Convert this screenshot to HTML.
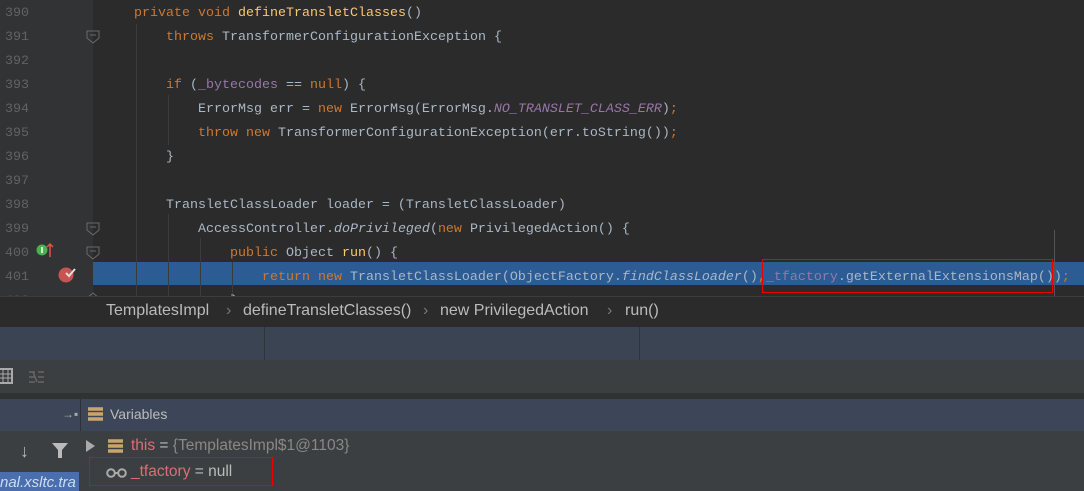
<!DOCTYPE html>
<html><head><meta charset="utf-8"><style>
*{margin:0;padding:0;box-sizing:border-box}
body{width:1084px;height:491px;overflow:hidden;background:#2b2b2b;position:relative;font-family:"Liberation Sans",sans-serif}
.gut{position:absolute;left:0;top:0;width:93px;height:296px;background:#313335}
.ln{position:absolute;left:5px;width:30px;font:13.33px "Liberation Mono",monospace;color:#606366;line-height:24px}
.code{position:absolute;left:102px;font:13.33px "Liberation Mono",monospace;color:#a9b7c6;line-height:24px;white-space:pre}
.k{color:#cc7832}.f{color:#ffc66d}.p{color:#9876aa}.i{font-style:italic}.ps{color:#9876aa;font-style:italic}
.sel{position:absolute;left:93px;top:262px;width:991px;height:23px;background:#2d5c94}
.vl{position:absolute;width:1px;background:#3b3b3b}
.bc{position:absolute;left:0;top:296px;width:1084px;height:31px;background:#2b2b2b;border-top:1px solid #3c3c3c;color:#bbb;font-size:16px}
.bc span{position:absolute;top:5px}
.band{position:absolute;left:0;top:327px;width:1084px;height:33px;background:#3b4452}
.tb{position:absolute;left:0;top:360px;width:1084px;height:33px;background:#3c3f41}
.sep{position:absolute;left:0;top:393px;width:1084px;height:6px;background:#323232}
.vh{position:absolute;left:0;top:399px;width:1084px;height:32px;background:#3d4658}
.low{position:absolute;left:0;top:431px;width:1084px;height:60px;background:#3c3f41}
.red{position:absolute;border:1.5px solid #e00}
</style></head><body>
<div class="gut"></div>
<div class="sel"></div>
<div class="vl" style="left:136px;top:24px;height:272px"></div>
<div class="vl" style="left:168px;top:95px;height:50px"></div>
<div class="vl" style="left:168px;top:214px;height:82px"></div>
<div class="vl" style="left:200px;top:238px;height:58px"></div>
<div class="vl" style="left:232px;top:262px;height:34px"></div>
<div style="position:absolute;left:1054px;top:230px;width:1px;height:66px;background:#555"></div>
<div class="ln" style="top:2px">390<br>391<br>392<br>393<br>394<br>395<br>396<br>397<br>398<br>399<br>400<br>401<br>402</div>
<div class="code" style="top:2px"><span>    <span class="k">private void </span><span class="f">defineTransletClasses</span>()
        <span class="k">throws </span>TransformerConfigurationException {

        <span class="k">if </span>(<span class="p">_bytecodes</span> == <span class="k">null</span>) {
            ErrorMsg err = <span class="k">new </span>ErrorMsg(ErrorMsg.<span class="ps">NO_TRANSLET_CLASS_ERR</span>)<span class="k">;</span>
            <span class="k">throw new </span>TransformerConfigurationException(err.toString())<span class="k">;</span>
        }

        TransletClassLoader loader = (TransletClassLoader)
            AccessController.<span class="i">doPrivileged</span>(<span class="k">new </span>PrivilegedAction() {
                <span class="k">public </span>Object <span class="f">run</span>() {
                    <span class="k">return new </span>TransletClassLoader(ObjectFactory.<span class="i">findClassLoader</span>()<span class="k">,</span><span class="p">_tfactory</span>.getExternalExtensionsMap())<span class="k">;</span>
                }</span></div>
<svg style="position:absolute;left:86px;top:30px" width="14" height="270"><g fill="none" stroke="#6a6a6a"><path d="M1 1h12v7l-6 5l-6-5z"/><path d="M1 193h12v7l-6 5l-6-5z"/><path d="M1 217h12v7l-6 5l-6-5z"/><path d="M1 268l6-5l6 5"/></g><g stroke="#6a6a6a"><path d="M4 5h6M4 197h6M4 221h6"/></g></svg>
<svg style="position:absolute;left:35px;top:241px" width="20" height="20"><circle cx="7" cy="9" r="5.5" fill="#4caf50"/><path d="M7 6v6" stroke="#fff" stroke-width="1.5"/><path d="M15 16V3M12 6l3-3l3 3" stroke="#e05545" stroke-width="1.5" fill="none"/></svg>
<svg style="position:absolute;left:56px;top:262px" width="22" height="22"><circle cx="10" cy="13" r="7.5" fill="#c75450"/><path d="M10 11l3 3l6-7" stroke="#ddd" stroke-width="2" fill="none"/></svg>
<div class="red" style="left:762px;top:259px;width:291px;height:34px"></div>
<div class="bc"><span style="left:106px">TemplatesImpl</span><span style="left:226px;color:#777">›</span><span style="left:243px">defineTransletClasses()</span><span style="left:423px;color:#777">›</span><span style="left:440px">new PrivilegedAction</span><span style="left:607px;color:#777">›</span><span style="left:625px">run()</span></div>
<div class="band"><div style="position:absolute;left:264px;top:0;width:1px;height:33px;background:#2f353f"></div><div style="position:absolute;left:639px;top:0;width:1px;height:33px;background:#2f353f"></div></div>
<div class="tb">
<svg style="position:absolute;left:0;top:8px" width="60" height="18"><rect x="-4" y="1" width="16" height="14" fill="none" stroke="#aaa" stroke-width="2"/><path d="M-2 6h14M-2 10h14M3 2v13M8 2v13" stroke="#aaa"/><path d="M29 4h6M29 9h6M29 14h6M38 4h6M38 9h6M38 14h6M33 4l4 10" stroke="#666" stroke-width="1.5"/></svg>
</div>
<div class="sep"></div>
<div class="vh">
<span style="position:absolute;left:62px;top:8px;color:#aaa;font-size:12px">→▪</span>
<div style="position:absolute;left:80px;top:0;width:1px;height:92px;background:#2f3234"></div>
<svg style="position:absolute;left:88px;top:8px" width="16" height="16"><path d="M0 2h15M0 7h15M0 12h15" stroke="#c9a56a" stroke-width="3.5"/></svg>
<span style="position:absolute;left:110px;top:7px;color:#bbb;font-size:14px">Variables</span>
</div>
<div class="low">
<span style="position:absolute;left:20px;top:10px;color:#bbb;font-size:18px">↓</span>
<svg style="position:absolute;left:52px;top:12px" width="16" height="16"><path d="M0 0h16l-6 7v8h-4v-8z" fill="#bbb"/></svg>
<div style="position:absolute;left:0;top:41px;width:79px;height:19px;background:#4b6eaf"></div>
<span style="position:absolute;left:0;top:43px;color:#cde;font-size:15px;font-style:italic">nal.xsltc.tra</span>
<svg style="position:absolute;left:86px;top:8px" width="16" height="16"><path d="M0 1l9 6l-9 6z" fill="#aaa"/></svg>
<svg style="position:absolute;left:108px;top:8px" width="16" height="16"><path d="M0 2h15M0 7h15M0 12h15" stroke="#c9a56a" stroke-width="3.5"/></svg>
<span style="position:absolute;left:131px;top:6px;font-size:15.5px;color:#bbb"><span style="color:#e06c75">this</span> = <span style="color:#888">{TemplatesImpl$1@1103}</span></span>
<svg style="position:absolute;left:106px;top:36px" width="22" height="12"><circle cx="5" cy="6" r="3.8" fill="none" stroke="#aaa" stroke-width="2"/><circle cx="16" cy="6" r="3.8" fill="none" stroke="#aaa" stroke-width="2"/><path d="M9 6h3" stroke="#aaa" stroke-width="2"/></svg>
<span style="position:absolute;left:131px;top:32px;font-size:15.5px;color:#bbb"><span style="color:#e06c75">_tfactory</span> = null</span>
<div class="red" style="left:89px;top:26px;width:184px;height:29px"></div>
</div>
</body></html>
